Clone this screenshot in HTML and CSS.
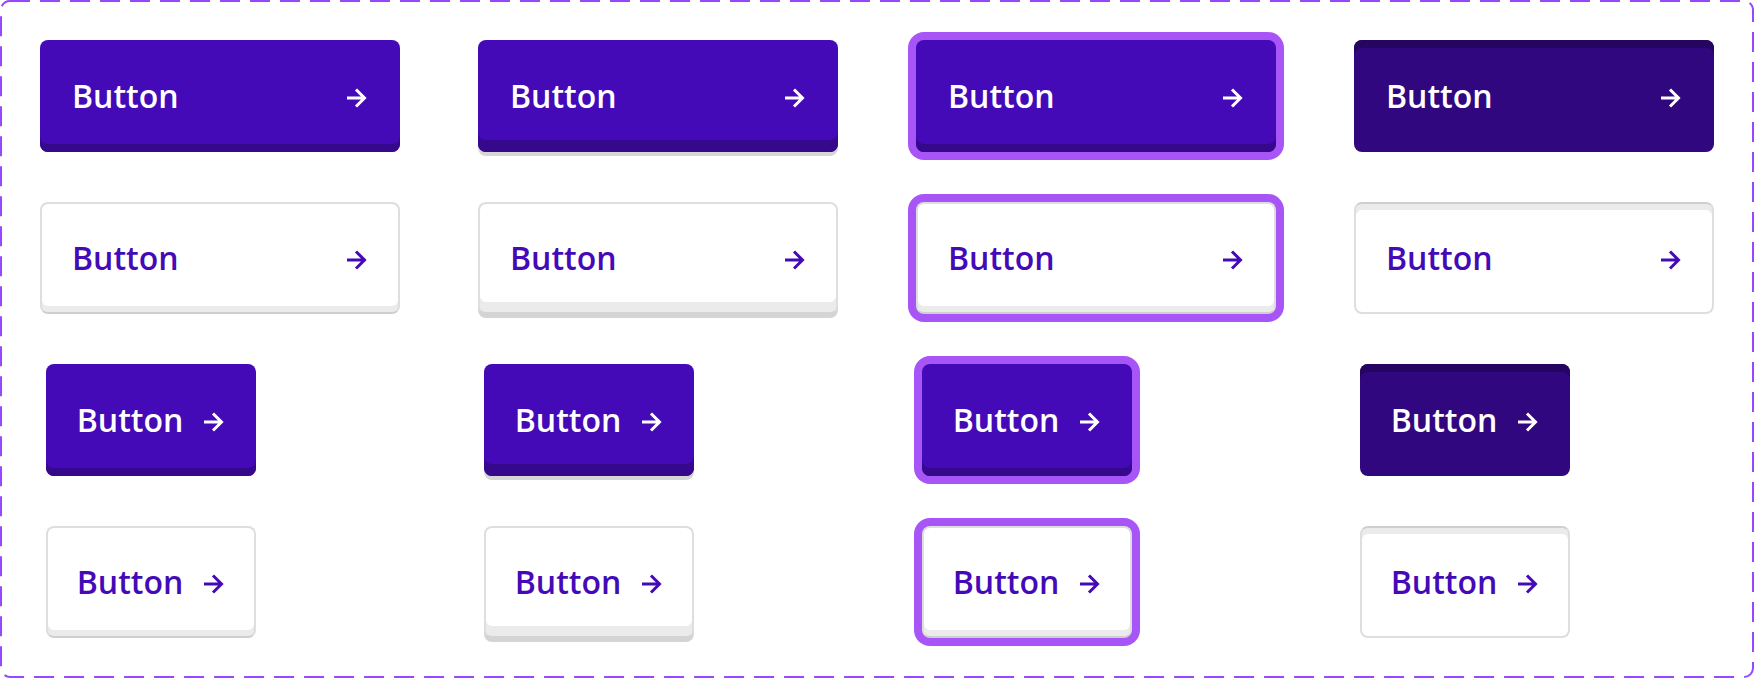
FILE: index.html
```html
<!DOCTYPE html>
<html lang="en">
<head>
<meta charset="utf-8">
<title>Buttons</title>
<link rel="stylesheet" href="styles.css">
</head>
<body>
<main class="frame">
  <svg class="frame-border" width="1754" height="678" viewBox="0 0 1754 678" aria-hidden="true">
    <rect x="1" y="1" width="1752" height="676" rx="9" ry="9" fill="none" stroke="#9747ff" stroke-width="2" stroke-dasharray="20 10"/>
  </svg>

  <button class="btn btn-lg btn-primary"><span class="label">Button</span><svg class="arrow" viewBox="0 0 22 20"><path d="M1 10h17.5M10 1.5l8.5 8.5-8.5 8.5"/></svg></button>
  <button class="btn btn-lg btn-primary is-hover"><span class="label">Button</span><svg class="arrow" viewBox="0 0 22 20"><path d="M1 10h17.5M10 1.5l8.5 8.5-8.5 8.5"/></svg></button>
  <button class="btn btn-lg btn-primary is-focus"><span class="label">Button</span><svg class="arrow" viewBox="0 0 22 20"><path d="M1 10h17.5M10 1.5l8.5 8.5-8.5 8.5"/></svg></button>
  <button class="btn btn-lg btn-primary is-active"><span class="label">Button</span><svg class="arrow" viewBox="0 0 22 20"><path d="M1 10h17.5M10 1.5l8.5 8.5-8.5 8.5"/></svg></button>

  <button class="btn btn-lg btn-secondary"><span class="label">Button</span><svg class="arrow" viewBox="0 0 22 20"><path d="M1 10h17.5M10 1.5l8.5 8.5-8.5 8.5"/></svg></button>
  <button class="btn btn-lg btn-secondary is-hover"><span class="label">Button</span><svg class="arrow" viewBox="0 0 22 20"><path d="M1 10h17.5M10 1.5l8.5 8.5-8.5 8.5"/></svg></button>
  <button class="btn btn-lg btn-secondary is-focus"><span class="label">Button</span><svg class="arrow" viewBox="0 0 22 20"><path d="M1 10h17.5M10 1.5l8.5 8.5-8.5 8.5"/></svg></button>
  <button class="btn btn-lg btn-secondary is-active"><span class="label">Button</span><svg class="arrow" viewBox="0 0 22 20"><path d="M1 10h17.5M10 1.5l8.5 8.5-8.5 8.5"/></svg></button>

  <button class="btn btn-sm btn-primary"><span class="label">Button</span><svg class="arrow" viewBox="0 0 22 20"><path d="M1 10h17.5M10 1.5l8.5 8.5-8.5 8.5"/></svg></button>
  <button class="btn btn-sm btn-primary is-hover"><span class="label">Button</span><svg class="arrow" viewBox="0 0 22 20"><path d="M1 10h17.5M10 1.5l8.5 8.5-8.5 8.5"/></svg></button>
  <button class="btn btn-sm btn-primary is-focus"><span class="label">Button</span><svg class="arrow" viewBox="0 0 22 20"><path d="M1 10h17.5M10 1.5l8.5 8.5-8.5 8.5"/></svg></button>
  <button class="btn btn-sm btn-primary is-active"><span class="label">Button</span><svg class="arrow" viewBox="0 0 22 20"><path d="M1 10h17.5M10 1.5l8.5 8.5-8.5 8.5"/></svg></button>

  <button class="btn btn-sm btn-secondary"><span class="label">Button</span><svg class="arrow" viewBox="0 0 22 20"><path d="M1 10h17.5M10 1.5l8.5 8.5-8.5 8.5"/></svg></button>
  <button class="btn btn-sm btn-secondary is-hover"><span class="label">Button</span><svg class="arrow" viewBox="0 0 22 20"><path d="M1 10h17.5M10 1.5l8.5 8.5-8.5 8.5"/></svg></button>
  <button class="btn btn-sm btn-secondary is-focus"><span class="label">Button</span><svg class="arrow" viewBox="0 0 22 20"><path d="M1 10h17.5M10 1.5l8.5 8.5-8.5 8.5"/></svg></button>
  <button class="btn btn-sm btn-secondary is-active"><span class="label">Button</span><svg class="arrow" viewBox="0 0 22 20"><path d="M1 10h17.5M10 1.5l8.5 8.5-8.5 8.5"/></svg></button>
</main>
</body>
</html>
```

FILE: styles.css
```css
html, body {
  margin: 0;
  padding: 0;
  background: #ffffff;
}

.frame {
  position: relative;
  box-sizing: border-box;
  width: 1754px;
  height: 678px;
  padding: 40px;
  display: grid;
  grid-template-columns: repeat(4, 360px);
  grid-auto-rows: 112px;
  column-gap: 78px;
  row-gap: 50px;
  background: #ffffff;
}

.frame-border {
  position: absolute;
  left: 0;
  top: 0;
  pointer-events: none;
}

.btn {
  box-sizing: border-box;
  height: 112px;
  margin: 0;
  border: 0;
  border-radius: 8px;
  display: flex;
  align-items: center;
  gap: 20px;
  padding: 0 32px;
  font-family: "Open Sans", Inter, sans-serif;
  font-weight: 600;
  font-size: 32px;
  line-height: 1;
  cursor: pointer;
}

.btn-lg {
  width: 360px;
  justify-content: space-between;
}

.btn-sm {
  width: 210px;
  justify-content: center;
  margin-left: 6px;
}

.label {
  display: block;
}

.arrow {
  width: 22px;
  height: 20px;
  flex: none;
  margin-top: 3px;
  fill: none;
  stroke: currentColor;
  stroke-width: 3;
  stroke-linejoin: miter;
  stroke-linecap: butt;
}

/* Primary */
.btn-primary {
  background: #440ab8;
  color: #ffffff;
  box-shadow: inset 0 -8px 0 #35088c;
}

.btn-primary.is-hover {
  box-shadow: inset 0 -12px 0 #35088c, 0 4px 0 #d6d6d6;
}

.btn-primary.is-focus {
  box-shadow: inset 0 -8px 0 #35088c, 0 0 0 8px #a855f7;
}

.btn-primary.is-active {
  background: #31077f;
  box-shadow: inset 0 8px 0 #250560;
}

/* Secondary */
.btn-secondary {
  background: #ffffff;
  color: #440ab8;
  border: 2px solid #dedede;
  border-bottom-color: #cfcfcf;
  padding: 0 30px;
  box-shadow: inset 0 -6px 0 #ebebeb;
}

.btn-secondary.is-hover {
  border-bottom-color: #d4d4d4;
  box-shadow: inset 0 -10px 0 #ebebeb, 0 4px 0 #d4d4d4;
}

.btn-secondary.is-focus {
  box-shadow: inset 0 -6px 0 #ebebeb, 0 0 0 8px #a855f7;
}

.btn-secondary.is-active {
  border-color: #dedede;
  border-top-color: #cfcfcf;
  box-shadow: inset 0 6px 0 #ebebeb;
}
```
